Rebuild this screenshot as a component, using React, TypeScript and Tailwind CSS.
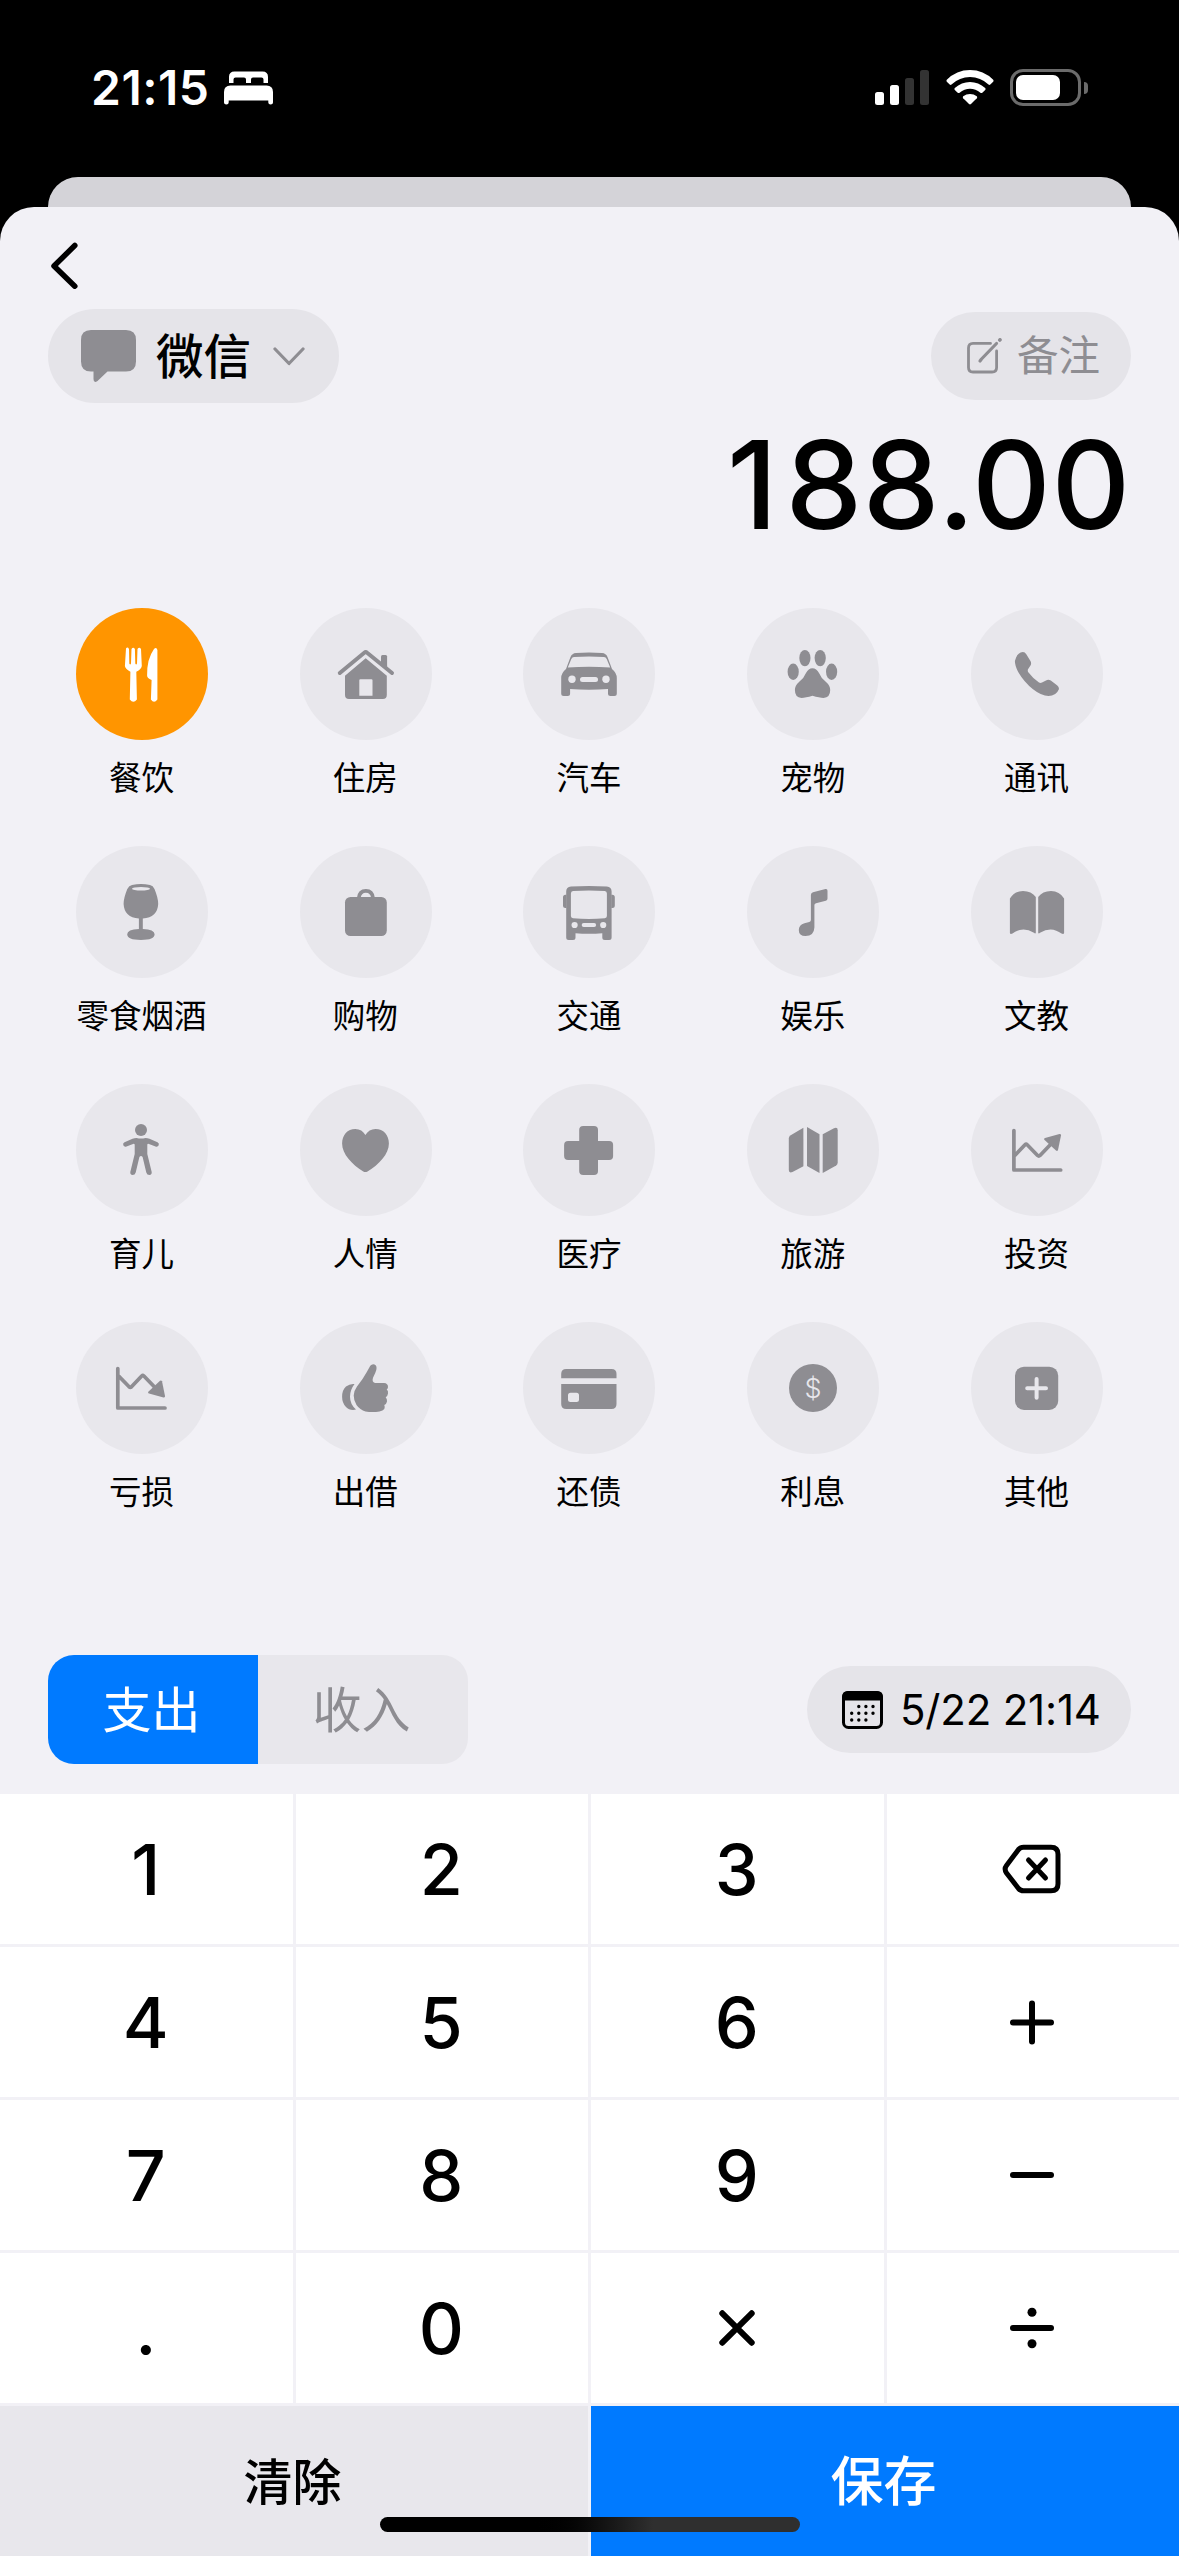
import type { ReactNode } from 'react';

type Category = { name: string; icon: ReactNode; active?: boolean };

// every category icon is drawn on the 132x132 canvas of its round button
const categories: Category[] = [
  {
    name: '餐饮',
    active: true,
    icon: (
      <>
        <path d="M50 40.5Q51.5 38.5 53 41L53.3 55.5Q54.2 57.5 55 55.5L55.5 41Q57.2 38.5 58.9 41L59.3 55.5Q60.2 57.5 61 55.5L61.5 41Q63.3 38.5 65 41L65.8 58Q65.5 61 60.3 63.8L60.9 91.5Q57.3 96 53.8 91.5L54.4 63.8Q49 60.5 48.9 58Z" />
        <path d="M81.4 42V91.5Q78 96 74.9 91.5L75.6 72Q71 70 71.1 67.5Q70.8 51 78 41Q80.5 38.5 81.4 42Z" />
      </>
    ),
  },
  {
    name: '住房',
    icon: (
      <>
        <path d="M39.8 65L64.3 44.8Q65.7 43.6 67.1 44.8L92 65" fill="none" stroke="currentColor" strokeWidth="4" strokeLinecap="round" />
        <path d="M81 57V48.5Q81 47 82.5 47H85.6Q87.1 47 87.1 48.5V62Z" />
        <path fillRule="evenodd" d="M65.7 50.3L86.8 67.8V87Q86.8 91 82.8 91H49Q45 91 45 87V67.8ZM60.3 71.3Q59.3 71.3 59.3 72.3V87.7H72.5V72.3Q72.5 71.3 71.5 71.3Z" />
      </>
    ),
  },
  {
    name: '汽车',
    icon: (
      <>
        <path fillRule="evenodd" d="M43 61L47.5 49Q49 45.3 53 45Q66 43.8 79 45Q83 45.3 84.5 49L89 61Q93.8 65 93.8 70V85.5Q93.8 88 91.3 88H87.5Q85 88 85 85.5V81Q66 82.3 47.1 81V85.5Q47.1 88 44.6 88H40.7Q38.2 88 38.2 85.5V70Q38.2 65 43 61ZM44.8 59.4L48.3 51Q49.2 49.2 51 49Q66 48.2 81 49Q82.8 49.2 83.7 51L87.2 59.4Q66 58.3 44.8 59.4Z" />
        <g fill="#e8e7ec">
          <circle cx="49" cy="71.3" r="3.7" />
          <circle cx="83" cy="71.3" r="3.7" />
          <rect x="57" y="69" width="18" height="5" rx="2.5" />
        </g>
      </>
    ),
  },
  {
    name: '宠物',
    icon: (
      <>
        <ellipse cx="46.2" cy="63.7" rx="5.6" ry="8.2" />
        <ellipse cx="57.9" cy="50.1" rx="5.6" ry="8.2" />
        <ellipse cx="73.2" cy="50.1" rx="5.6" ry="8.2" />
        <ellipse cx="84.6" cy="63.7" rx="5.6" ry="8.2" />
        <path d="M65.4 60.3Q69.5 60.3 72 65Q74 70 78.5 73.5Q83.2 77.5 83.2 82Q83.2 89.7 76.5 89.9Q72.5 89.9 65.5 87.8Q58.5 89.9 54.5 89.9Q47.9 89.7 47.9 82Q47.9 77.5 52.5 73.5Q57 70 59 65Q61.5 60.3 65.4 60.3Z" />
      </>
    ),
  },
  {
    name: '通讯',
    icon: (
      <path d="M51.8 44Q54 44 55.3 46.3L59.6 53.2Q60.5 55 59.8 57L57 61.3Q56.4 62.7 57.3 64.3Q62 70.5 68 74.6Q69.5 75.3 71 74.6L75 72.4Q77.5 71.2 79.8 72.6L86.3 77.4Q88.4 79.2 87.8 81.5Q85 88 77.5 88Q70.5 88 62 81.3Q53 74 47.5 64.5Q43.9 58 43.9 53Q45.5 45 51.8 44Z" />
    ),
  },
  {
    name: '零食烟酒',
    icon: (
      <>
        <path d="M56 39Q65 37 74 39Q77 39.7 78.5 43Q82.2 52 82.2 58Q81.5 71.5 66.8 72.5V82.9Q78.6 83.3 78.6 88.3Q78.6 94 65 94Q51.2 94 51.2 88.3Q51.2 83.3 62.9 82.9V72.5Q48.3 71.5 47.6 58Q47.6 52 51.3 43Q53 39.7 56 39Z" />
        <ellipse cx="65" cy="42.7" rx="9" ry="1.7" fill="#e8e7ec" />
      </>
    ),
  },
  {
    name: '购物',
    icon: (
      <>
        <rect x="45" y="51" width="41.8" height="39" rx="5.5" />
        <path d="M58.8 52Q59.5 44.8 65.9 44.8Q72.3 44.8 73 52" fill="none" stroke="currentColor" strokeWidth="3.7" />
      </>
    ),
  },
  {
    name: '交通',
    icon: (
      <>
        <path fillRule="evenodd" d="M43.2 45.5Q43.2 41 48 40.6Q66 39.2 83.8 40.6Q88.6 41 88.6 45.5V91.5Q88.6 94 86.1 94H81.8Q79.3 94 79.3 91.5V87.2Q66 88.3 52.5 87.2V91.5Q52.5 94 50 94H45.7Q43.2 94 43.2 91.5ZM47.9 47.5V70Q47.9 72 50 72.3Q66 73.6 81.8 72.3Q83.9 72 83.9 70V47.5Q83.9 45.3 81.8 45.1Q66 44.1 50 45.1Q47.9 45.3 47.9 47.5Z" />
        <path d="M43.5 48.7H42.5Q40 48.7 40 51.2V59.5Q40 62 42.5 62H43.5ZM88.3 48.7H89.3Q91.8 48.7 91.8 51.2V59.5Q91.8 62 89.3 62H88.3Z" />
        <g fill="#e8e7ec">
          <circle cx="51.6" cy="79" r="3.1" />
          <circle cx="80.2" cy="79" r="3.1" />
          <rect x="58.7" y="77" width="14.4" height="4" rx="2" />
        </g>
      </>
    ),
  },
  {
    name: '娱乐',
    icon: (
      <path d="M63.9 49Q63.9 46.8 66 46.2L78.5 43.1Q80.5 42.7 80.5 44.8V52.5Q80.5 54.3 78.8 54.8L69 57.2Q67.4 57.6 67.4 59V81.5Q67 90 58.5 90Q51.8 90 51.8 84Q51.8 79 57.5 77.3L62.3 76.1Q63.9 75.7 63.9 74Z" />
    ),
  },
  {
    name: '文教',
    icon: (
      <>
        <path d="M38.9 52.5Q43.5 45 52 45Q60.5 45 64.8 51V86.7Q64.5 88 63 86.8Q57.5 83.4 52.5 83.4Q46.5 83.6 41.5 87.6Q39.2 88.6 38.9 87Z" />
        <path transform="matrix(-1 0 0 1 132 0)" d="M38.9 52.5Q43.5 45 52 45Q60.5 45 64.8 51V86.7Q64.5 88 63 86.8Q57.5 83.4 52.5 83.4Q46.5 83.6 41.5 87.6Q39.2 88.6 38.9 87Z" />
      </>
    ),
  },
  {
    name: '育儿',
    icon: (
      <>
        <circle cx="65" cy="46" r="6" />
        <path d="M60.5 54Q65 55 69.5 54Q71.5 54 73.5 54.8L81.5 58.3Q83.5 59.3 82.7 61.3Q81.8 63.3 79.5 62.6L72.3 59.8Q71.2 59.8 71.3 61V70L75.7 88Q76 90.6 73.5 91Q71 91 70.3 88.5L66.6 73Q65 71 63.4 73L59.7 88.5Q59 91 56.5 91Q54 90.6 54.3 88L58.7 70V61Q58.8 59.8 57.7 59.8L50.5 62.6Q48.2 63.3 47.3 61.3Q46.5 59.3 48.5 58.3L56.5 54.8Q58.5 54 60.5 54Z" />
      </>
    ),
  },
  {
    name: '人情',
    icon: (
      <path d="M65.4 51C67.8 47 71 45 75.5 45C83.5 45 88.9 51 88.9 59.5C88.9 70 79 80.5 67.5 87.5Q65.4 88.6 63.3 87.5C52 80.5 42.1 70 42.1 59.5C42.1 51 47.5 45 55.3 45C60 45 63 47 65.4 51Z" />
    ),
  },
  {
    name: '医疗',
    icon: (
      <>
        <rect x="56.2" y="42" width="18.8" height="49" rx="4" />
        <rect x="41.1" y="57" width="49" height="19" rx="4" />
      </>
    ),
  },
  {
    name: '旅游',
    icon: (
      <>
        <path d="M56.4 43.7V82.3L45.5 88Q41.8 89.5 41.8 86V54.5Q41.8 52.5 43.3 51.5Z" />
        <path d="M60 43L72.5 50.3V89L60 82Z" />
        <path d="M75.7 50.3L87 44.2Q90.7 42.7 90.7 46.2V78.5Q90.7 80.5 89.2 81.4L75.7 89Z" />
      </>
    ),
  },
  {
    name: '投资',
    icon: (
      <>
        <path d="M42.9 46.5V86H89.7M44 71.3L54 60.8Q55.1 59.7 56.2 60.8L66.6 71.5Q67.8 72.6 69 71.5L80 60" fill="none" stroke="currentColor" strokeWidth="3.7" strokeLinecap="round" strokeLinejoin="round" />
        <path d="M88.5 50Q90.3 49.7 90 51.5L87 66Q86.3 67.5 85 66.5L73.3 55.8Q72.5 54.4 74 53.9Z" />
      </>
    ),
  },
  {
    name: '亏损',
    icon: (
      <>
        <path d="M41.8 46.5V86H89M42.9 54.3L53.1 64.8Q54.3 65.9 55.5 64.8L65.7 54Q66.8 53 67.9 54L79 65.5" fill="none" stroke="currentColor" strokeWidth="3.7" strokeLinecap="round" strokeLinejoin="round" />
        <path d="M87.5 75.4Q89.3 75.7 89 74L86 59.3Q85.3 57.8 84 58.8L72.3 69.7Q71.5 71.1 73 71.6Z" />
      </>
    ),
  },
  {
    name: '出借',
    icon: (
      <>
        <path d="M70.3 43.8Q72 41.6 74.5 42.4Q77.3 43.5 76.3 48Q75.5 51 73 55.8Q71.6 60 75 61H84Q88 61.3 88 65Q88 66.8 86.7 67.3Q88.5 69 88 71.5Q87.7 74 85.7 75.3Q87.3 77 87 79.5Q86.6 82 84.3 83Q85.2 85 84.3 87Q83 89 79.5 89.4Q72.5 90.4 65.5 89.4Q60 88 56.5 83Q53.6 78 53.7 73.5Q53.7 69 57 64.5Q63 57 66.5 50.5Z" />
        <path d="M54.5 62Q50 68 50 74.7Q50 82 56 87.6Q49.5 88.8 46 85Q42.1 81 42.1 74.7Q42.1 68 46 64.5Q50 61.4 54.5 62Z" />
      </>
    ),
  },
  {
    name: '还债',
    icon: (
      <>
        <path d="M38.2 56.3V52Q38.2 47 43.2 47H88.5Q93.5 47 93.5 52V56.3Z" />
        <path fillRule="evenodd" d="M38.2 62H93.5V82Q93.5 87 88.5 87H43.2Q38.2 87 38.2 82ZM47.5 70.7Q45 70.7 45 73.2V77.5Q45 80 47.5 80H53.5Q56 80 56 77.5V73.2Q56 70.7 53.5 70.7Z" />
      </>
    ),
  },
  {
    name: '利息',
    icon: (
      <>
        <circle cx="66" cy="66" r="24" />
        <text x="66" y="75.6" textAnchor="middle" fontSize="27" fontWeight="300" fill="#e8e7ec">
          $
        </text>
      </>
    ),
  },
  {
    name: '其他',
    icon: (
      <>
        <rect x="44" y="44.7" width="43.2" height="43.3" rx="9" />
        <path d="M65.6 57V75.7M56.2 66.3H75" stroke="#e8e7ec" strokeWidth="4" strokeLinecap="round" />
      </>
    ),
  },
];

const stroke = { fill: 'none', stroke: 'currentColor', strokeWidth: 6, strokeLinecap: 'round', strokeLinejoin: 'round' } as const;

const keys: { id: string; icon?: ReactNode }[] = [
  { id: '1' },
  { id: '2' },
  { id: '3' },
  {
    id: 'delete',
    icon: (
      <svg className="w-16 h-16" viewBox="0 0 64 64" {...stroke} strokeWidth={5}>
        <path d="M23.5 10.2H51Q58 10.2 58 17.2V46.8Q58 53.8 51 53.8H23.5Q20.5 53.8 18.5 51.5L6.5 36Q3.8 32 6.5 28.5L18.5 12.5Q20.5 10.2 23.5 10.2Z" />
        <path d="M28.5 23L45.5 41M45.5 23L28.5 41" />
      </svg>
    ),
  },
  { id: '4' },
  { id: '5' },
  { id: '6' },
  { id: 'plus', icon: <svg className="w-16 h-16" viewBox="0 0 64 64" {...stroke}><path d="M32 13.500V51.500M13 32.500H51" /></svg> },
  { id: '7' },
  { id: '8' },
  { id: '9' },
  { id: 'minus', icon: <svg className="w-16 h-16" viewBox="0 0 64 64" {...stroke}><path d="M13 32H51" /></svg> },
  { id: '.' },
  { id: '0' },
  { id: 'times', icon: <svg className="w-16 h-16" viewBox="0 0 64 64" {...stroke}><path d="M17.3 17.3L46.7 46.7M46.7 17.3L17.3 46.7" /></svg> },
  {
    id: 'divide',
    icon: (
      <svg className="w-16 h-16" viewBox="0 0 64 64" {...stroke}>
        <path d="M13 32H51" />
        <circle cx="32" cy="16.3" r="4.5" fill="currentColor" stroke="none" />
        <circle cx="32" cy="47.7" r="4.5" fill="currentColor" stroke="none" />
      </svg>
    ),
  },
];

function StatusBar() {
  return (
    <div className="h-[177px] flex justify-between items-start pt-[69px] pl-[91px] pr-[91px] text-white">
      <div className="flex items-start">
        <span className="w-[133px] text-[48px] leading-[38px] font-semibold tracking-[0.5px]">21:15</span>
        <svg className="w-[49px] h-[34px] mt-[2px]" viewBox="0 0 49 34" fill="currentColor">
          <path d="M5 12V6Q5 .5 10.500 .5H38.500Q44 .5 44 6V12H39.500V8.500Q39.500 6.500 37.500 6.500H29Q27 6.500 27 8.500V12H22V8.500Q22 6.500 20 6.500H11.500Q9.500 6.500 9.500 8.500V12Z" />
          <path d="M0 21Q0 14.500 6.500 14.500H42.500Q49 14.500 49 21V31.500Q49 33.500 46.700 33.500Q44.300 33.500 44.300 31.500V29.500H4.700V31.500Q4.700 33.500 2.300 33.500Q0 33.500 0 31.500Z" />
        </svg>
      </div>
      <div className="flex items-start">
        <div className="flex items-end gap-[6px] h-9">
          <div className="w-[9px] h-[13px] rounded-[2.500px] bg-white" />
          <div className="w-[9px] h-5 rounded-[2.500px] bg-white" />
          <div className="w-[9px] h-[27px] rounded-[2.500px] bg-[#333]" />
          <div className="w-[9px] h-[35px] rounded-[2.500px] bg-[#333]" />
        </div>
        <svg className="w-12 h-9 ml-[17px]" viewBox="0 0 48 36" fill="currentColor">
          <path d="M.8 10.800Q10.500 1 24 1Q37.500 1 47.200 10.800Q48 11.800 47.200 12.700L44.300 15.500Q43.400 16.300 42.500 15.500Q34.500 8 24 8Q13.500 8 5.500 15.500Q4.600 16.300 3.700 15.500L.8 12.700Q0 11.800 .8 10.800Z" />
          <path d="M8.800 19Q15.500 13 24 13Q32.500 13 39.200 19Q40.100 19.900 39.200 20.900L36.300 23.700Q35.400 24.500 34.400 23.700Q29.700 19.700 24 19.700Q18.300 19.700 13.600 23.700Q12.600 24.500 11.700 23.700L8.800 20.900Q7.900 19.900 8.800 19Z" />
          <path d="M17.200 27.300Q20.200 24.900 24 24.900Q27.800 24.900 30.800 27.300Q31.700 28.200 30.800 29.200L25 35Q24 35.900 23 35L17.200 29.200Q16.300 28.200 17.200 27.300Z" />
        </svg>
        <div className="flex items-center ml-4 gap-[3px]">
          <div className="w-[71px] h-[37px] border-3 border-[#6b6b6b] rounded-[13px] p-[3px]">
            <div className="w-[44px] h-[25px] bg-white rounded-[7px]" />
          </div>
          <div className="w-[4px] h-3 bg-[#6b6b6b] rounded-r-full" />
        </div>
      </div>
    </div>
  );
}

function CategoryButton({ category }: { category: Category }) {
  return (
    <div className="h-[238px] flex flex-col items-center">
      <div
        className={
          category.active
            ? 'w-[132px] h-[132px] rounded-full bg-[#ff9500] text-white'
            : 'w-[132px] h-[132px] rounded-full bg-[#e8e7ec] text-[#8e8d92]'
        }
      >
        <svg className="w-full h-full" viewBox="0 0 132 132" fill="currentColor">
          {category.icon}
        </svg>
      </div>
      <span className="mt-[14px] pr-px text-[32.500px] leading-[49px] whitespace-nowrap">{category.name}</span>
    </div>
  );
}

export default function App() {
  return (
    <div className="relative w-[1179px] h-[2556px] flex flex-col overflow-hidden bg-black text-black font-['Inter','Noto_Sans_CJK_SC',sans-serif]">
      <StatusBar />
      <div className="h-[30px] mx-12 rounded-t-[30px] bg-[#d4d3d8]" />

      <div className="flex-1 flex flex-col rounded-t-[34px] overflow-hidden bg-[#f2f1f6]">
        <div className="h-[102px] pl-12 pt-[34px]">
          <svg className="w-8 h-12" viewBox="0 0 32 48" {...stroke}>
            <path d="M26.800 4.500L6 25L26.800 45.200" strokeWidth="5.500" />
          </svg>
        </div>

        <div className="flex items-center justify-between px-12">
          <div className="w-[291px] h-[94px] rounded-full bg-[#e5e4e9] flex items-center pl-[33px]">
            <svg className="w-[55px] h-[54px]" viewBox="0 0 55 54" fill="#8e8d92">
              <path d="M10 1H45Q55 1 55 11V32.500Q55 42.500 45 42.500H26.500L16.500 52Q12.500 54.500 12.500 50V42.500H10Q0 42.500 0 32.500V11Q0 1 10 1Z" />
            </svg>
            <span className="ml-5 pt-[2px] text-[47.500px] leading-[70px] font-medium">微信</span>
            <svg className="w-8 h-5 ml-[22px]" viewBox="0 0 32 20" fill="none" stroke="#8e8d92" strokeWidth="3.200" strokeLinecap="round" strokeLinejoin="round">
              <path d="M2 3L16 17.500L30 3" />
            </svg>
          </div>
          <div className="w-[200px] h-[88px] rounded-full bg-[#e5e4e9] flex items-center pl-9 text-[#8e8d92]">
            <svg className="w-9 h-9" viewBox="0 0 36 36" fill="none" stroke="currentColor" strokeWidth="2.800" strokeLinecap="round" strokeLinejoin="round">
              <path d="M23.500 5.400H6Q1.500 5.400 1.500 10V29.500Q1.500 34 6 34H25Q29.600 34 29.600 29.500V13" />
              <path d="M29.500 5.500L14.500 21L13 23" strokeWidth="3.200" />
              <path d="M32.800 2L33 1.800" strokeWidth="3.600" />
            </svg>
            <span className="ml-[14px] text-[41.500px] leading-[60px]">备注</span>
          </div>
        </div>

        <div className="h-[205px] pt-[8px] pr-[48px] text-right text-[122px] leading-[148px] font-medium tracking-[0.7px]">
          <span className="mr-[7px]">1</span>88.00
        </div>

        <div className="grid grid-cols-5 px-[30px]">
          {categories.map((c) => (
            <CategoryButton key={c.name} category={c} />
          ))}
        </div>

        <div className="h-[234px] flex items-center justify-between px-12 pt-[65px]">
          <div className="w-[420px] h-[109px] rounded-[26px] overflow-hidden flex text-[49px]">
            <div className="flex-1 flex items-center justify-center pt-[2px] pr-[3px] bg-[#007aff] text-white">支出</div>
            <div className="flex-1 flex items-center justify-center pt-[2px] pr-[3px] bg-[#e8e7ec] text-[#8e8d92]">收入</div>
          </div>
          <div className="w-[324px] h-[87px] rounded-full bg-[#e5e4e9] flex items-center pl-[35px]">
            <svg className="w-[41px] h-[38px]" viewBox="0 0 41 38">
              <rect x="1.500" y="1.500" width="38" height="35" rx="5" fill="none" stroke="currentColor" strokeWidth="3" />
              <path d="M0 9.500V6Q0 0 6 0H35Q41 0 41 6V9.500Z" />
              <path d="M16.800 15.500H33M9.700 22.300H33M9.700 29H26" fill="none" stroke="currentColor" strokeWidth="3.400" strokeLinecap="round" strokeDasharray="0 7.100" />
            </svg>
            <span className="ml-[17px] text-[42px] tracking-[-0.2px] whitespace-nowrap">5/22 21:14</span>
          </div>
        </div>

        <div className="flex-1 grid grid-cols-4 auto-rows-[150px] gap-[3px]">
          {keys.map((k) => (
            <div key={k.id} className="bg-white flex items-center justify-center pr-px text-[70px] font-medium">
              {k.icon ?? k.id}
            </div>
          ))}
          <div className="col-span-2 bg-[#e8e7ec] flex items-center justify-center pt-[4px] pr-[3px] text-[49px] font-medium">清除</div>
          <div className="col-span-2 bg-[#007aff] text-white flex items-center justify-center pt-[4px] pr-[3px] text-[53px] font-medium">保存</div>
        </div>
      </div>

      {/* home indicator */}
      <div className="absolute left-[380px] bottom-6 w-[420px] h-[15px] rounded-full bg-linear-to-r from-black from-35% to-[#2f2f2f] to-65%" />
    </div>
  );
}
